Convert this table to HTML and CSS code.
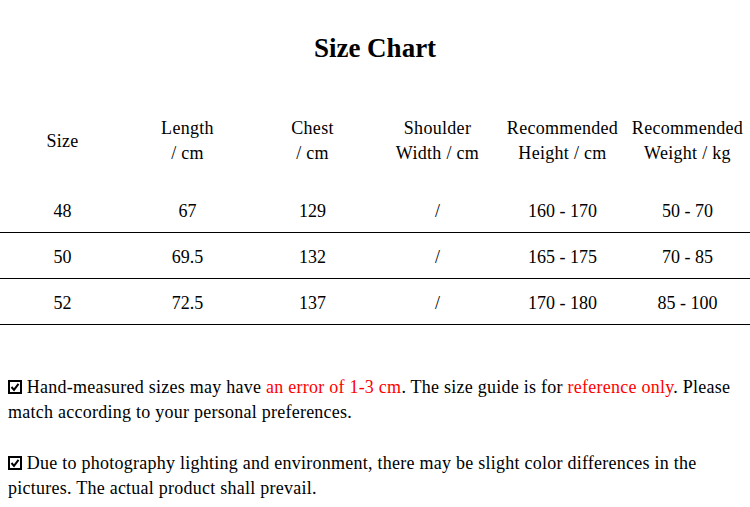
FILE: index.html
```html
<!DOCTYPE html>
<html>
<head>
<meta charset="utf-8">
<link rel="stylesheet" href="styles.css">
</head>
<body>
<h1 class="title">Size Chart</h1>
<div class="chart">
  <div class="row head">
    <div>Size</div>
    <div>Length<br>/ cm</div>
    <div>Chest<br>/ cm</div>
    <div>Shoulder<br>Width / cm</div>
    <div>Recommended<br>Height / cm</div>
    <div>Recommended<br>Weight / kg</div>
  </div>
  <div class="row data">
    <div>48</div><div>67</div><div>129</div><div>/</div><div>160 - 170</div><div>50 - 70</div>
  </div>
  <div class="row data">
    <div>50</div><div>69.5</div><div>132</div><div>/</div><div>165 - 175</div><div>70 - 85</div>
  </div>
  <div class="row data">
    <div>52</div><div>72.5</div><div>137</div><div>/</div><div>170 - 180</div><div>85 - 100</div>
  </div>
</div>
<div class="notes">
  <p class="note"><svg class="box" width="14" height="14" viewBox="0 0 14 14" aria-label="☑"><rect x="1" y="1" width="12" height="12" fill="none" stroke="#000" stroke-width="2"/><path d="M3.5 7 L6 9.8 L10.5 3.8" fill="none" stroke="#000" stroke-width="2"/></svg> Hand-measured sizes may have <span class="red">an error of 1-3 cm</span>. The size guide is for <span class="red">reference only</span>. Please match according to your personal preferences.</p>
  <p class="note"><svg class="box" width="14" height="14" viewBox="0 0 14 14" aria-label="☑"><rect x="1" y="1" width="12" height="12" fill="none" stroke="#000" stroke-width="2"/><path d="M3.5 7 L6 9.8 L10.5 3.8" fill="none" stroke="#000" stroke-width="2"/></svg> Due to photography lighting and environment, there may be slight color differences in the pictures. The actual product shall prevail.</p>
</div>
</body>
</html>
```
FILE: styles.css
```css
html, body {
  margin: 0;
  padding: 0;
  background: #fff;
}
body {
  width: 750px;
  font-family: "Liberation Serif", "Times New Roman", serif;
  color: #000;
  font-size: 18px;
}
.title {
  margin: 0;
  padding: 33px 0 31px;
  font-size: 27px;
  line-height: 31px;
  font-weight: bold;
  text-align: center;
}
.row {
  display: grid;
  grid-template-columns: repeat(6, 1fr);
  align-items: center;
  text-align: center;
  line-height: 25px;
}
.head {
  height: 92px;
  letter-spacing: 0.3px;
}
.data {
  box-sizing: border-box;
  height: 46px;
  padding-top: 3px;
  border-bottom: 1px solid #000;
}
.notes {
  padding: 50px 8px 0;
}
.note {
  margin: 0 0 26px;
  line-height: 25px;
  letter-spacing: 0.25px;
}
.red {
  color: #ff0000;
}
.box {
  display: inline-block;
  vertical-align: -1px;
}
```
